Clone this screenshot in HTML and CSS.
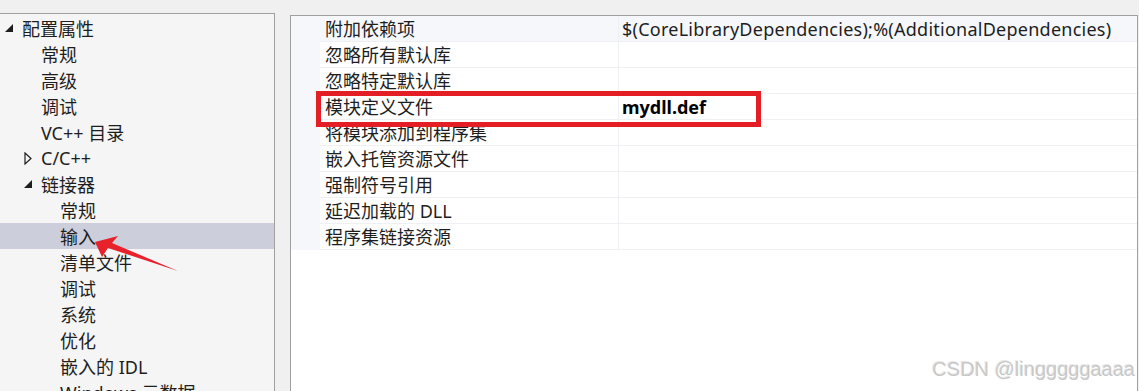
FILE: index.html
```html
<!DOCTYPE html>
<html lang="zh-CN">
<head>
  <meta charset="UTF-8">
  <title>属性页</title>
  <link rel="stylesheet" href="styles.css">
</head>
<body>

<div class="page">
  <div class="tree">
    <div class="node lvl0">
      <span class="toggle"><svg width="9" height="9" viewBox="0 0 9 9"><polygon points="8,0 8,8 0,8" fill="#1e1e1e"/></svg></span>
      <span>配置属性</span>
    </div>
    <div class="node lvl1"><span class="toggle"></span><span>常规</span></div>
    <div class="node lvl1"><span class="toggle"></span><span>高级</span></div>
    <div class="node lvl1"><span class="toggle"></span><span>调试</span></div>
    <div class="node lvl1"><span class="toggle"></span><span>VC++ 目录</span></div>
    <div class="node lvl1">
      <span class="toggle"><svg width="8" height="13" viewBox="0 0 8 13"><polygon points="1,1 7,6.5 1,12" fill="none" stroke="#1e1e1e" stroke-width="1.2"/></svg></span>
      <span>C/C++</span>
    </div>
    <div class="node lvl1">
      <span class="toggle"><svg width="9" height="9" viewBox="0 0 9 9"><polygon points="8,0 8,8 0,8" fill="#1e1e1e"/></svg></span>
      <span>链接器</span>
    </div>
    <div class="node lvl2"><span class="toggle"></span><span>常规</span></div>
    <div class="node lvl2 selected"><span class="toggle"></span><span>输入</span></div>
    <div class="node lvl2"><span class="toggle"></span><span>清单文件</span></div>
    <div class="node lvl2"><span class="toggle"></span><span>调试</span></div>
    <div class="node lvl2"><span class="toggle"></span><span>系统</span></div>
    <div class="node lvl2"><span class="toggle"></span><span>优化</span></div>
    <div class="node lvl2"><span class="toggle"></span><span>嵌入的 IDL</span></div>
    <div class="node lvl2"><span class="toggle"></span><span>Windows 元数据</span></div>
  </div>

  <div class="grid">
    <div class="prop first">
      <div class="gutter"></div>
      <div class="name">附加依赖项</div>
      <div class="value wide">$(CoreLibraryDependencies);%(AdditionalDependencies)</div>
    </div>
    <div class="prop">
      <div class="gutter"></div>
      <div class="name">忽略所有默认库</div>
      <div class="value"></div>
    </div>
    <div class="prop">
      <div class="gutter"></div>
      <div class="name">忽略特定默认库</div>
      <div class="value"></div>
    </div>
    <div class="prop">
      <div class="gutter"></div>
      <div class="name">模块定义文件</div>
      <div class="value bold">mydll.def</div>
    </div>
    <div class="prop">
      <div class="gutter"></div>
      <div class="name">将模块添加到程序集</div>
      <div class="value"></div>
    </div>
    <div class="prop">
      <div class="gutter"></div>
      <div class="name">嵌入托管资源文件</div>
      <div class="value"></div>
    </div>
    <div class="prop">
      <div class="gutter"></div>
      <div class="name">强制符号引用</div>
      <div class="value"></div>
    </div>
    <div class="prop">
      <div class="gutter"></div>
      <div class="name">延迟加载的 DLL</div>
      <div class="value"></div>
    </div>
    <div class="prop">
      <div class="gutter"></div>
      <div class="name">程序集链接资源</div>
      <div class="value"></div>
    </div>

    <div class="highlight"></div>
  </div>
</div>

<svg class="arrow" width="90" height="45" viewBox="0 0 90 45">
  <polygon points="3,12 26,6 20,13 86,41 16,18 10,27" fill="#e8222a"/>
</svg>

<div class="watermark">CSDN @lingggggaaaa</div>

</body>
</html>
```

FILE: styles.css
```css
html, body {
  margin: 0;
  height: 100%;
  overflow: hidden;
}
body {
  background-color: #f0f0f0;
  font-family: "Noto Sans", "Noto Sans CJK SC", sans-serif;
  font-size: 18px;
  color: #1e1e1e;
  position: relative;
}
.page {
  display: flex;
  align-items: flex-start;
  height: 100%;
}
.tree {
  width: 274px;
  margin-top: 13px;
  padding-top: 1px;
  height: 420px;
  background-color: #f5f5f5;
  border-top: 1px solid #a0a0a0;
  border-right: 1px solid #a0a0a0;
}
.node {
  display: flex;
  align-items: center;
  height: 26px;
  white-space: nowrap;
}
.node.lvl0 { padding-left: 5px; }
.node.lvl1 { padding-left: 24px; }
.node.lvl2 { padding-left: 43px; }
.node.selected {
  background-color: #cccedb;
}
.toggle {
  width: 17px;
  display: flex;
  align-items: center;
}
.grid {
  position: relative;
  flex: 1;
  margin: 15px 1px 0 15px;
  height: 420px;
  background-color: #fff;
  border: 1px solid #a0a0a0;
}
.prop {
  display: flex;
  height: 26px;
}
.gutter {
  width: 29px;
  background-color: #f5f7fb;
}
.name {
  width: 293px;
  padding-left: 5px;
  border-right: 1px solid #eef0f4;
  border-bottom: 1px solid #eef0f4;
  line-height: 26px;
  white-space: nowrap;
}
.value {
  flex: 1;
  padding-left: 3px;
  border-bottom: 1px solid #eef0f4;
  line-height: 26px;
  white-space: nowrap;
}
.value.wide {
  letter-spacing: 0.25px;
}
.prop.first .name,
.prop.first .value {
  background-color: #f5f7fb;
}
.value.bold {
  font-weight: bold;
  color: #000;
}
.highlight {
  position: absolute;
  left: 25px;
  top: 75px;
  width: 435px;
  height: 26px;
  border: 5px solid #e31e24;
}
.arrow {
  position: absolute;
  left: 92px;
  top: 230px;
}
.watermark {
  position: absolute;
  right: 4px;
  top: 358px;
  font-family: "Liberation Sans", Arial, sans-serif;
  font-size: 20px;
  color: #c8c8c8;
  text-shadow: 1px 1px 0 #ffffff, -1px -1px 0 #e8e8e8;
}
```
